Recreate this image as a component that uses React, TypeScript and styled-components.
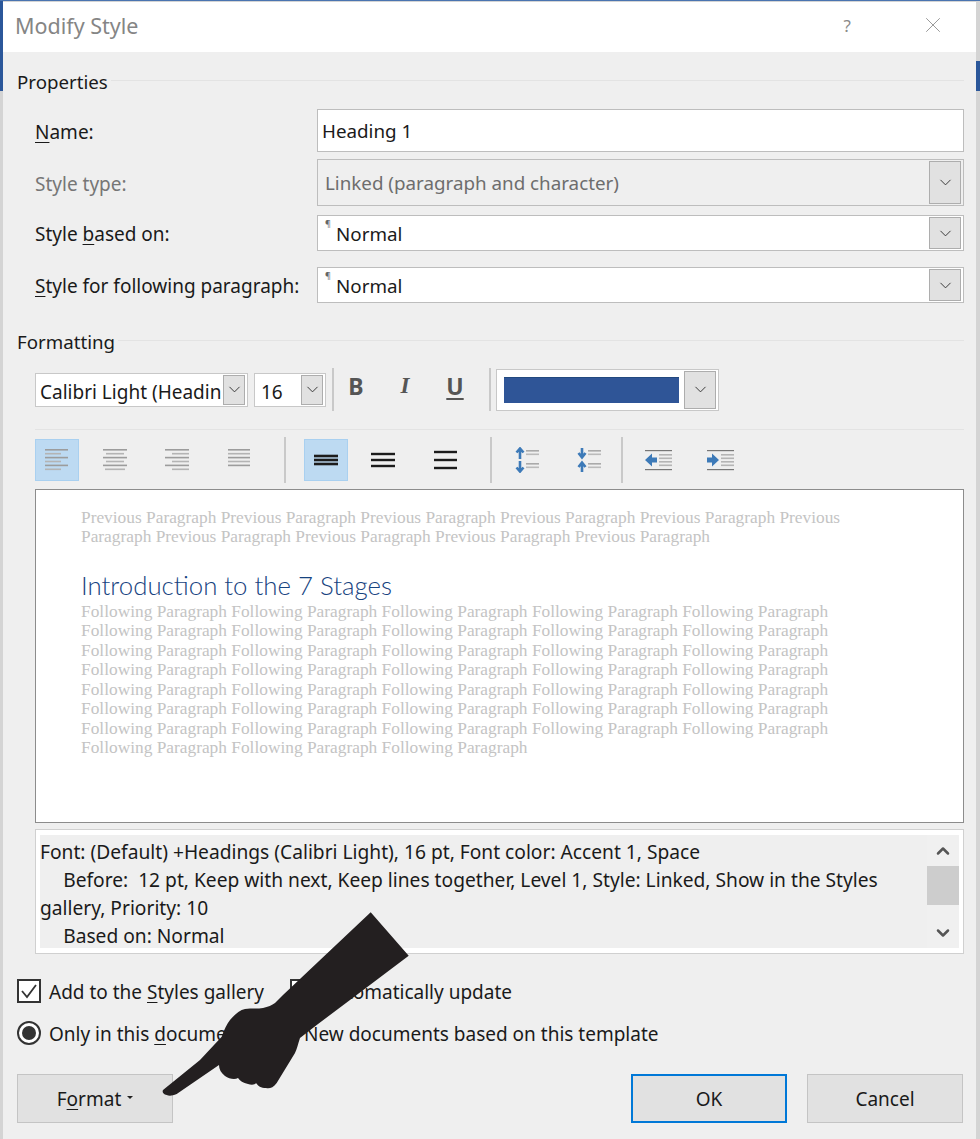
import React from "react";
import styled, { createGlobalStyle } from "styled-components";
import { ChevronDown, ChevronUp, X } from "lucide-react";

const GlobalStyle = createGlobalStyle`
  html, body { margin: 0; padding: 0; background: #d4d4d4; }
  * { box-sizing: border-box; }
`;

const UI_FONT = `"Noto Sans", "Open Sans", sans-serif`;

const Page = styled.div`
  position: relative;
  width: 980px;
  height: 1139px;
  padding: 1px 4px 0 3px;
  overflow: hidden;
  border-top: 1px solid #4a74b0;
  background:
    linear-gradient(#2b579a, #2b579a) left top / 3px 90px no-repeat,
    linear-gradient(#2b579a, #2b579a) right 0 top 60px / 4px 30px no-repeat,
    #d4d4d4;
  font-family: ${UI_FONT};
  font-size: 19px;
  color: #1a1a1a;
`;

const Dialog = styled.div`
  height: 100%;
  background: #efefef;
`;

const TitleBar = styled.div`
  height: 50px;
  padding: 0 30px 0 12px;
  display: flex;
  align-items: center;
  background: #fff;
`;

const Title = styled.div`
  flex: 1;
  font-size: 21.5px;
  color: #858585;
  margin-top: -3px;
`;

const HelpMark = styled.span`
  margin-right: 69px;
  font-size: 17px;
  color: #8a8a8a;
  margin-top: -4px;
`;

const CloseMark = styled(X)`
  color: #8a8a8a;
  margin-top: -4px;
`;

const Body = styled.div`
  padding: 0 12px 0 14px;
`;

const Section = styled.div<{ $top: number }>`
  display: flex;
  align-items: center;
  gap: 3px;
  height: 28px;
  margin-top: ${(p) => p.$top}px;
  font-size: 18.7px;
  &::after {
    content: "";
    flex: 1;
    height: 1px;
    margin-top: -2px;
    background: #e3e3e3;
  }
`;

const Inset = styled.div`
  padding-left: 18px;
`;

const FieldRow = styled.div<{ $height: number; $top: number }>`
  display: grid;
  grid-template-columns: 282px 1fr;
  align-items: center;
  height: ${(p) => p.$height}px;
  margin-top: ${(p) => p.$top}px;
`;

const Label = styled.div<{ $disabled?: boolean }>`
  padding-top: 2px;
  color: ${(p) => (p.$disabled ? "#767676" : "#1a1a1a")};
  white-space: nowrap;
`;

const Mn = styled.span`
  text-decoration: underline;
  text-underline-offset: 3px;
`;

const Field = styled.div<{ $disabled?: boolean }>`
  height: 100%;
  display: flex;
  align-items: center;
  padding: 1px 2px 1px 4px;
  border: 1px solid #bdbdbd;
  background: ${(p) => (p.$disabled ? "#efefef" : "#fff")};
  color: ${(p) => (p.$disabled ? "#6d6d6d" : "#1a1a1a")};
  font-size: 18.8px;
`;

const FieldText = styled.span<{ $pl?: number; $drop?: number }>`
  flex: 1;
  padding-left: ${(p) => p.$pl ?? 0}px;
  margin-top: ${(p) => p.$drop ?? 0}px;
  white-space: nowrap;
  overflow: hidden;
`;

const ParaMark = styled.span`
  align-self: flex-start;
  width: 11px;
  margin-left: 3px;
  font-size: 9px;
  line-height: 14px;
  color: #666;
`;

const DropButton = styled.div<{ $w?: number }>`
  width: ${(p) => p.$w ?? 32}px;
  align-self: stretch;
  flex: none;
  display: flex;
  align-items: center;
  justify-content: center;
  border: 1px solid #adadad;
  background: #e1e1e1;
  color: #333;
`;

const Toolbar = styled.div<{ $top: number; $height: number }>`
  display: flex;
  align-items: center;
  height: ${(p) => p.$height}px;
  margin-top: ${(p) => p.$top}px;
`;

const ToolCombo = styled.div<{ $w: number; $ml?: number }>`
  width: ${(p) => p.$w}px;
  height: 34px;
  margin-left: ${(p) => p.$ml ?? 0}px;
  flex: none;
  display: flex;
  align-items: center;
  padding: 1px 2px 1px 4px;
  border: 1px solid #c8c8c8;
  background: #fff;
  font-size: 19px;
  line-height: 26px;
`;

const Divider = styled.div<{ $ml: number; $h: number }>`
  width: 2px;
  height: ${(p) => p.$h}px;
  margin-left: ${(p) => p.$ml}px;
  flex: none;
  background: #c9c9c9;
`;

const FontMark = styled.span<{ $ml: number; $italic?: boolean; $serif?: boolean }>`
  width: 20px;
  margin-left: ${(p) => p.$ml}px;
  margin-top: -7px;
  flex: none;
  text-align: center;
  font-size: 23px;
  font-weight: 700;
  font-style: ${(p) => (p.$italic ? "italic" : "normal")};
  font-family: ${(p) => (p.$serif ? `"Liberation Serif", serif` : UI_FONT)};
  color: #555;
`;

const UnderlineMark = styled(FontMark)`
  text-decoration: underline;
  text-underline-offset: 3px;
`;

const ColorCombo = styled.div`
  width: 223px;
  height: 42px;
  margin-left: 5px;
  flex: none;
  display: flex;
  align-items: stretch;
  padding: 1px;
  border: 1px solid #c8c8c8;
  background: #fff;
`;

const Swatch = styled.div`
  width: 175px;
  margin: 6px 5px 6px 6px;
  border-top: 1px solid #22497f;
  background: #2f5597;
`;

const RuleLine = styled.div<{ $top: number }>`
  height: 1px;
  margin-top: ${(p) => p.$top}px;
  background: #e3e3e3;
`;

const ToolSlot = styled.div<{ $ml: number; $w: number; $active?: boolean }>`
  width: ${(p) => p.$w}px;
  height: 42px;
  margin-left: ${(p) => p.$ml}px;
  flex: none;
  display: flex;
  align-items: center;
  justify-content: center;
  border: 1px solid ${(p) => (p.$active ? "#a9d0f0" : "transparent")};
  background: ${(p) => (p.$active ? "#bddaf2" : "transparent")};
`;

const Preview = styled.div`
  height: 334px;
  margin-top: 8px;
  padding: 18px 30px 0 45px;
  border: 1px solid #8c8c8c;
  background: #fff;
  font-family: "Liberation Serif", serif;
  font-size: 17.35px;
  line-height: 19.43px;
  color: #c4c4c4;
`;

const PreviewPara = styled.div`
  white-space: pre;
`;

const PreviewHeading = styled.div`
  margin-top: 21px;
  font-family: "Lato", sans-serif;
  font-weight: 300;
  font-size: 25.8px;
  line-height: 34px;
  color: #17437f;
`;

const InfoBox = styled.div`
  height: 125px;
  margin-top: 6px;
  padding: 5px 4px;
  display: flex;
  border: 1px solid #d0d0d0;
  background: #fff;
`;

const InfoText = styled.div`
  flex: 1;
  padding-top: 3px;
  background: #efefef;
  font-size: 19.2px;
  line-height: 28px;
  white-space: pre-wrap;
`;

const ScrollBar = styled.div`
  width: 32px;
  display: flex;
  flex-direction: column;
  align-items: center;
  background: #f0f0f0;
  color: #555;
`;

const ScrollArrow = styled.div`
  height: 31px;
  display: flex;
  align-items: center;
  justify-content: center;
`;

const ScrollThumb = styled.div`
  width: 100%;
  height: 39px;
  margin-bottom: 10px;
  background: #cdcdcd;
`;

const ScrollSpacer = styled.div`
  flex: 1;
`;

const OptionRow = styled.div<{ $top: number; $first: number }>`
  display: grid;
  grid-template-columns: ${(p) => p.$first}px 1fr;
  align-items: center;
  height: 24px;
  margin-top: ${(p) => p.$top}px;
`;

const Option = styled.div`
  display: flex;
  align-items: center;
  gap: 8px;
  white-space: nowrap;
`;

const OptionText = styled.span`
  padding-top: 2px;
`;

const CheckBox = styled.div`
  width: 24px;
  height: 24px;
  flex: none;
  display: flex;
  align-items: center;
  justify-content: center;
  border: 2px solid #333;
  background: #fff;
`;

const Radio = styled.div<{ $on?: boolean }>`
  width: 24px;
  height: 24px;
  flex: none;
  border: 2px solid #333;
  border-radius: 50%;
  background: #fff;
  display: flex;
  align-items: center;
  justify-content: center;
  &::after {
    content: "";
    width: 14px;
    height: 14px;
    border-radius: 50%;
    background: ${(p) => (p.$on ? "#333" : "transparent")};
  }
`;

const ButtonRow = styled.div`
  display: flex;
  margin-top: 31px;
`;

const Btn = styled.div<{ $primary?: boolean; $ml?: number }>`
  width: 156px;
  height: 49px;
  margin-left: ${(p) => p.$ml ?? 0}px;
  flex: none;
  display: flex;
  align-items: center;
  justify-content: center;
  border: ${(p) => (p.$primary ? "2px solid #0078d7" : "1px solid #c4c4c4")};
  background: #e1e1e1;
`;

const Caret = styled.span`
  width: 0;
  height: 0;
  margin: 0 0 2px 6px;
  border-left: 3px solid transparent;
  border-right: 3px solid transparent;
  border-top: 3px solid #222;
`;

const HandOverlay = styled.svg`
  position: absolute;
  left: 160px;
  top: 904px;
  width: 255px;
  height: 195px;
`;

function Lines({ rows, width = 24 }: { rows: [number, number][]; width?: number }) {
  // x offset and length per row
  return (
    <svg width={width} height={24} viewBox={`0 0 ${width} 24`}>
      {rows.map(([x, len], i) => (
        <rect key={i} x={x} y={1 + i * 3.9} width={len} height={1.6} fill={i % 2 ? "#b4b4b4" : "#9c9c9c"} />
      ))}
    </svg>
  );
}

function SpacingBars({ w, gap, h = 2.4 }: { w: number; gap: number; h?: number }) {
  const total = h * 3 + gap * 2;
  const top = (24 - total) / 2;
  return (
    <svg width={w} height={24} viewBox={`0 0 ${w} 24`}>
      {[0, 1, 2].map((i) => (
        <rect key={i} x={0} y={top + i * (h + gap)} width={w} height={h} fill="#1c1c1c" />
      ))}
    </svg>
  );
}

function ParaSpaceIcon({ inward }: { inward?: boolean }) {
  const blue = "#3d7ab8";
  return (
    <svg width={26} height={26} viewBox="0 0 26 26">
      {inward ? (
        <>
          <path d="M5 1v8M1.5 6L5 10.5 8.5 6" fill="none" stroke={blue} strokeWidth={2.6} />
          <path d="M5 25v-8M1.5 20L5 15.5 8.5 20" fill="none" stroke={blue} strokeWidth={2.6} />
        </>
      ) : (
        <>
          <path d="M5 12V2M1.5 5.5L5 1.5 8.5 5.5" fill="none" stroke={blue} strokeWidth={2.6} />
          <path d="M5 14v10M1.5 20.5L5 24.5 8.5 20.5" fill="none" stroke={blue} strokeWidth={2.6} />
        </>
      )}
      <rect x={11} y={3} width={13} height={1.6} fill="#aaa" />
      <rect x={11} y={6.5} width={13} height={1.6} fill="#bbb" />
      <rect x={11} y={16} width={13} height={1.6} fill="#aaa" />
      <rect x={11} y={19.5} width={13} height={1.6} fill="#bbb" />
    </svg>
  );
}

function IndentIcon({ increase }: { increase?: boolean }) {
  return (
    <svg width={28} height={22} viewBox="0 0 28 22">
      <rect x={0} y={1} width={27} height={1.2} fill="#777" />
      <rect x={0} y={20} width={27} height={1.2} fill="#777" />
      {[5, 8.5, 12, 15.5].map((y) => (
        <rect key={y} x={14} y={y} width={13} height={1.6} fill="#b5b5b5" />
      ))}
      {increase ? (
        <path d="M0 8.5h5V4.5l7 6.5-7 6.5v-4H0z" fill="#3d7ab8" />
      ) : (
        <path d="M12 8.5H7V4.5L0 11l7 6.5v-4h5z" fill="#3d7ab8" />
      )}
    </svg>
  );
}

const chevron = <ChevronDown size={19} strokeWidth={1.2} />;

const prevLines =
  "Previous Paragraph Previous Paragraph Previous Paragraph Previous Paragraph Previous Paragraph Previous\nParagraph Previous Paragraph Previous Paragraph Previous Paragraph Previous Paragraph";
const followFull =
  "Following Paragraph Following Paragraph Following Paragraph Following Paragraph Following Paragraph";
const followText = [...Array(7).fill(followFull), "Following Paragraph Following Paragraph Following Paragraph"].join("\n");

export default function App() {
  return (
    <Page>
      <GlobalStyle />
      <Dialog>
        <TitleBar>
          <Title>Modify Style</Title>
          <HelpMark>?</HelpMark>
          <CloseMark size={26} strokeWidth={0.8} />
        </TitleBar>
        <Body>
          <Section $top={15}>Properties</Section>
          <Inset>
            <FieldRow $height={43} $top={14}>
              <Label><Mn>N</Mn>ame:</Label>
              <Field><FieldText>Heading 1</FieldText></Field>
            </FieldRow>
            <FieldRow $height={47} $top={7}>
              <Label $disabled>Style type:</Label>
              <Field $disabled>
                <FieldText $pl={3}>Linked (paragraph and character)</FieldText>
                <DropButton>{chevron}</DropButton>
              </Field>
            </FieldRow>
            <FieldRow $height={36} $top={9}>
              <Label>Style <Mn>b</Mn>ased on:</Label>
              <Field>
                <ParaMark>¶</ParaMark>
                <FieldText $drop={1}>Normal</FieldText>
                <DropButton>{chevron}</DropButton>
              </Field>
            </FieldRow>
            <FieldRow $height={36} $top={16}>
              <Label><Mn>S</Mn>tyle for following paragraph:</Label>
              <Field>
                <ParaMark>¶</ParaMark>
                <FieldText $drop={1}>Normal</FieldText>
                <DropButton>{chevron}</DropButton>
              </Field>
            </FieldRow>
          </Inset>
          <Section $top={24}>Formatting</Section>
          <Inset>
            <Toolbar $top={13} $height={43}>
              <ToolCombo $w={213}>
                <FieldText $drop={5}>Calibri Light (Headin</FieldText>
                <DropButton $w={22}>{chevron}</DropButton>
              </ToolCombo>
              <ToolCombo $w={72} $ml={6}>
                <FieldText $pl={2} $drop={5}>16</FieldText>
                <DropButton $w={22}>{chevron}</DropButton>
              </ToolCombo>
              <Divider $ml={6} $h={43} />
              <FontMark $ml={12}>B</FontMark>
              <FontMark $ml={29} $italic $serif>I</FontMark>
              <UnderlineMark $ml={30}>U</UnderlineMark>
              <Divider $ml={24} $h={43} />
              <ColorCombo>
                <Swatch />
                <DropButton $w={32}>{chevron}</DropButton>
              </ColorCombo>
            </Toolbar>
            <RuleLine $top={18} />
            <Toolbar $top={9} $height={42}>
              <ToolSlot $ml={0} $w={44} $active>
                <Lines rows={[[0, 23], [0, 16], [0, 23], [0, 16], [0, 23], [0, 16]]} />
              </ToolSlot>
              <ToolSlot $ml={14} $w={44}>
                <Lines rows={[[0, 24], [3, 18], [0, 24], [3, 18], [0, 24], [2, 20]]} />
              </ToolSlot>
              <ToolSlot $ml={18} $w={44}>
                <Lines rows={[[0, 24], [7, 17], [0, 24], [7, 17], [0, 24], [7, 17]]} />
              </ToolSlot>
              <ToolSlot $ml={18} $w={44}>
                <Lines width={22} rows={[[0, 22], [0, 22], [0, 22], [0, 22], [0, 22]]} />
              </ToolSlot>
              <Divider $ml={23} $h={46} />
              <ToolSlot $ml={18} $w={44} $active>
                <SpacingBars w={24} gap={1.4} h={2.6} />
              </ToolSlot>
              <ToolSlot $ml={13} $w={44}>
                <SpacingBars w={24} gap={3.6} />
              </ToolSlot>
              <ToolSlot $ml={18} $w={44}>
                <SpacingBars w={23} gap={5.6} />
              </ToolSlot>
              <Divider $ml={23} $h={46} />
              <ToolSlot $ml={14} $w={44}><ParaSpaceIcon /></ToolSlot>
              <ToolSlot $ml={18} $w={44}><ParaSpaceIcon inward /></ToolSlot>
              <Divider $ml={9} $h={46} />
              <ToolSlot $ml={14} $w={44}><IndentIcon /></ToolSlot>
              <ToolSlot $ml={18} $w={44}><IndentIcon increase /></ToolSlot>
            </Toolbar>
            <Preview>
              <PreviewPara>{prevLines}</PreviewPara>
              <PreviewHeading>Introduction to the 7 Stages</PreviewHeading>
              <PreviewPara>{followText}</PreviewPara>
            </Preview>
            <InfoBox>
              <InfoText>
                {"Font: (Default) +Headings (Calibri Light), 16 pt, Font color: Accent 1, Space\n    \u2009Before:  12 pt, Keep with next, Keep lines together, Level 1, Style: Linked, Show in the Styles\ngallery, Priority: 10\n    \u2009Based on: Normal"}
              </InfoText>
              <ScrollBar>
                <ScrollArrow><ChevronUp size={20} strokeWidth={3} /></ScrollArrow>
                <ScrollThumb />
                <ScrollSpacer />
                <ScrollArrow><ChevronDown size={20} strokeWidth={3} /></ScrollArrow>
              </ScrollBar>
            </InfoBox>
          </Inset>
          <OptionRow $top={23} $first={273}>
            <Option>
              <CheckBox>
                <svg width={18} height={16} viewBox="0 0 18 16">
                  <path d="M2 8l5 6L16 2" fill="none" stroke="#333" strokeWidth={1.8} />
                </svg>
              </CheckBox>
              <OptionText>Add to the <Mn>S</Mn>tyles gallery</OptionText>
            </Option>
            <Option>
              <CheckBox />
              <OptionText>Automatically update</OptionText>
            </Option>
          </OptionRow>
          <OptionRow $top={18} $first={255}>
            <Option>
              <Radio $on />
              <OptionText>Only in this <Mn>d</Mn>ocument</OptionText>
            </Option>
            <Option>
              <Radio />
              <OptionText>New documents based on this template</OptionText>
            </Option>
          </OptionRow>
          <ButtonRow>
            <Btn><span>F<Mn>o</Mn>rmat</span><Caret /></Btn>
            <Btn $primary $ml={458}>OK</Btn>
            <Btn $ml={20}>Cancel</Btn>
          </ButtonRow>
        </Body>
      </Dialog>
      <HandOverlay viewBox="160 905 255 195">
        <path
          fill="#231f20"
          d="M370.7 912.3L408.7 955.7L350 1000L316.7 1025L300 1038C298 1044 297 1049 295 1053L276.7 1083C273 1088 269 1089 266 1088C261 1088 258 1086 256 1083C255 1085 251 1085 248 1084C243 1083 240 1081 238 1078C235 1080 229 1079 225 1076C221 1073 219 1069 219 1065L176.7 1094C172 1096 169 1096 166.7 1095C163 1094 162 1092 163 1090L200 1060L221.7 1036.7C224 1030 227 1024 230 1020C235 1014 240 1010 245 1009C252 1008 258 1009 263 1008C268 1007 272 1005 275 1003L283 995Z"
        />
      </HandOverlay>
    </Page>
  );
}
